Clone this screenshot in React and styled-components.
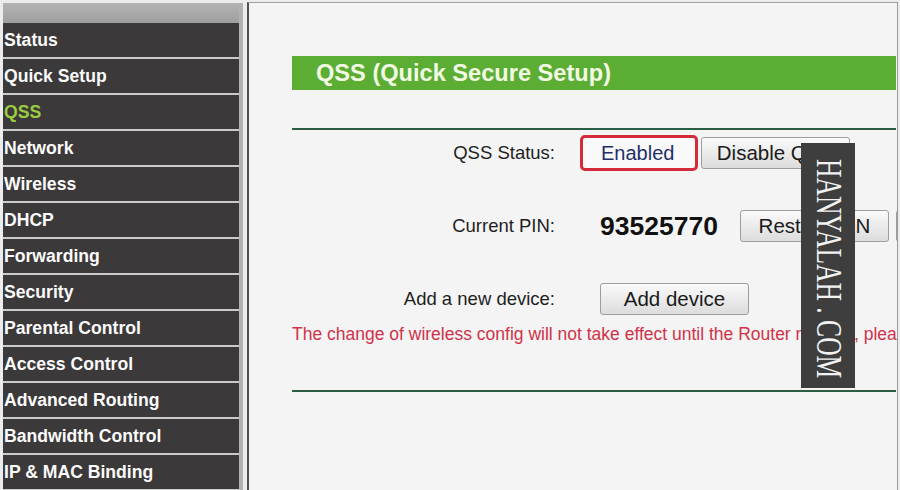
import React from "react";
import styled, { createGlobalStyle } from "styled-components";

const GlobalStyle = createGlobalStyle`
  body {
    margin: 0;
    background: #ececec;
    font-family: "Liberation Sans", Arial, sans-serif;
  }
`;

const Page = styled.div`
  position: relative;
  display: flex;
  align-items: flex-start;
  gap: 4px;
  box-sizing: border-box;
  width: 900px;
  height: 490px;
  padding: 3px 0 0 3px;
  overflow: hidden;
`;

const Sidebar = styled.nav`
  display: flex;
  flex-direction: column;
  width: 236px;
  flex-shrink: 0;
  border-right: 4px solid #b2b2b2;
`;

const SideTop = styled.div`
  height: 20px;
  background: linear-gradient(#b4b4b4, #9e9e9e);
`;

const MenuItem = styled.div`
  display: flex;
  align-items: center;
  height: 34px;
  padding-left: 1px;
  background: #3b3939;
  border-bottom: 2px solid #cbcbcb;
  color: ${(p) => (p.$active ? "#9bcb3e" : "#fbfbfb")};
  font-size: 17.6px;
  font-weight: bold;
  white-space: nowrap;
`;

const Main = styled.main`
  box-sizing: border-box;
  width: 651px;
  height: 500px;
  margin-top: -1px;
  padding: 0 1px 0 43px;
  background: #f4f4f4;
  border-left: 2px solid #505050;
  border-top: 1px solid #a0a0a0;
  border-right: 1px solid #9a9a9a;
  overflow: hidden;
`;

const TitleBar = styled.h1`
  margin: 53px 0 0;
  height: 34px;
  padding-left: 24px;
  background: #5cad33;
  color: #f1fbe4;
  font-size: 23.6px;
  font-weight: bold;
  line-height: 34px;
  white-space: nowrap;
`;

const Rule = styled.hr`
  margin: ${(p) => p.$top}px 0 0;
  height: 2px;
  border: 0;
  background: #2b5d45;
`;

const Form = styled.div`
  display: flex;
  flex-direction: column;
  gap: 37px;
  margin-top: 5px;
`;

const Row = styled.div`
  display: grid;
  grid-template-columns: 263px auto;
  column-gap: 25px;
  align-items: center;
  height: 36px;
`;

const Label = styled.div`
  text-align: right;
  color: #1e1e1e;
  font-size: 18.5px;
  white-space: nowrap;
`;

const Value = styled.div`
  display: flex;
  align-items: center;
  gap: ${(p) => p.$gap || 7}px;
  padding-left: ${(p) => (p.$indent ? 20 : 0)}px;
  white-space: nowrap;
`;

const StatusBox = styled.div`
  box-sizing: border-box;
  display: flex;
  align-items: center;
  width: 118px;
  height: 36px;
  padding-left: 18px;
  border: 3px solid #d42a3a;
  border-radius: 5px;
  background: #f9f9f9;
  color: #1f2f6b;
  font-size: 20px;
`;

const Pin = styled.span`
  margin-right: 15px;
  color: #111;
  font-size: 26.5px;
  font-weight: bold;
`;

const Button = styled.button`
  flex-shrink: 0;
  width: 149px;
  height: 32px;
  padding: 0;
  border: 1px solid #9d9d9d;
  border-radius: 3px;
  background: linear-gradient(#fafafa, #dcdcdc);
  color: #1a1a1a;
  font-family: "Liberation Sans", Arial, sans-serif;
  font-size: 20.5px;
`;

const Notice = styled.p`
  margin: 7px 0 0;
  color: #cf3349;
  font-size: 17.5px;
  line-height: 20px;
  white-space: nowrap;
`;

const Watermark = styled.div`
  position: absolute;
  left: 801px;
  top: 143px;
  display: flex;
  justify-content: center;
  width: 54px;
  height: 245px;
  padding-top: 16px;
  box-sizing: border-box;
  background: #3e3e3e;
`;

const WatermarkText = styled.span`
  writing-mode: vertical-rl;
  transform: scaleY(0.73);
  transform-origin: top center;
  color: #f2f2f2;
  font-family: "Liberation Serif", "Times New Roman", serif;
  font-size: 35px;
  line-height: 1;
  white-space: nowrap;
`;

const menu = [
  "Status",
  "Quick Setup",
  "QSS",
  "Network",
  "Wireless",
  "DHCP",
  "Forwarding",
  "Security",
  "Parental Control",
  "Access Control",
  "Advanced Routing",
  "Bandwidth Control",
  "IP & MAC Binding",
];

export default function App() {
  return (
    <>
      <GlobalStyle />
      <Page>
        <Sidebar>
          <SideTop />
          {menu.map((item) => (
            <MenuItem key={item} $active={item === "QSS"}>
              {item}
            </MenuItem>
          ))}
        </Sidebar>

        <Main>
          <TitleBar>QSS (Quick Secure Setup)</TitleBar>
          <Rule $top={38} />
          <Form>
            <Row>
              <Label>QSS Status:</Label>
              <Value $gap={3}>
                <StatusBox>Enabled</StatusBox>
                <Button>Disable QSS</Button>
              </Value>
            </Row>
            <Row>
              <Label>Current PIN:</Label>
              <Value $indent>
                <Pin>93525770</Pin>
                <Button>Restore PIN</Button>
                <Button>Gen new PIN</Button>
              </Value>
            </Row>
            <Row>
              <Label>Add a new device:</Label>
              <Value $indent>
                <Button>Add device</Button>
              </Value>
            </Row>
          </Form>
          <Notice>
            The change of wireless config will not take effect until the Router reboots, please reboot.
          </Notice>
          <Rule $top={46} />
        </Main>

        <Watermark>
          <WatermarkText>HANYALAH . COM</WatermarkText>
        </Watermark>
      </Page>
    </>
  );
}
